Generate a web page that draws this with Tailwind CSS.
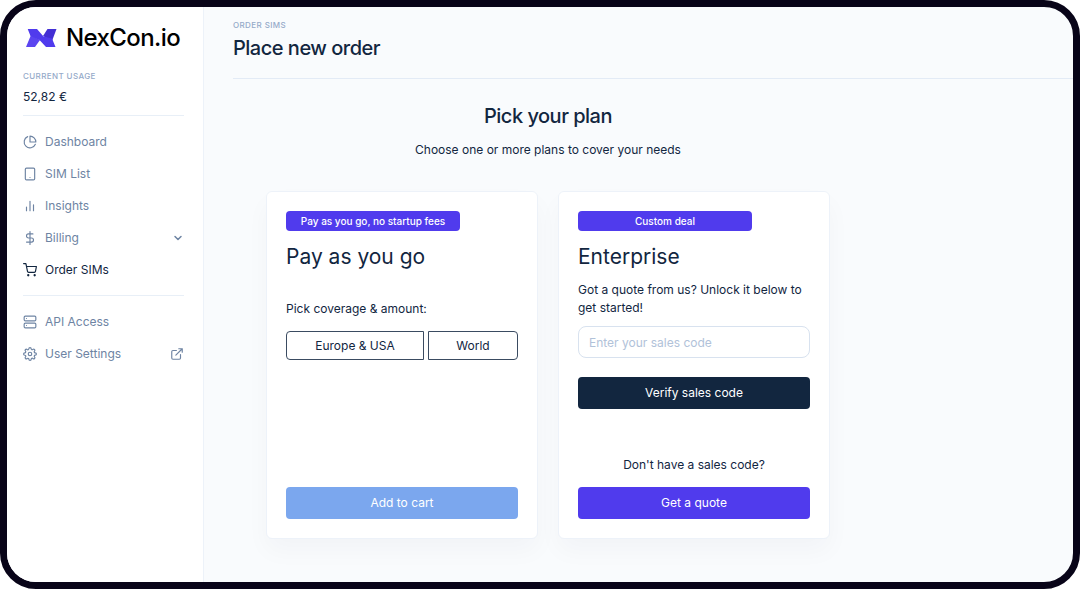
<!DOCTYPE html>
<html lang="en">
<head>
  <meta charset="UTF-8" />
  <meta name="viewport" content="width=device-width, initial-scale=1.0" />
  <title>NexCon.io - Place new order</title>
  <script src="https://cdn.jsdelivr.net/npm/@tailwindcss/browser@4"></script>
</head>
<body class="bg-white font-['Inter',sans-serif] text-[12px] leading-[18px] text-[#12263f]">
  <div class="flex min-h-screen overflow-hidden rounded-[36px] border-[7px] border-[#080418] bg-[#f9fbfd]">

    <!-- Sidebar -->
    <aside class="w-[197px] shrink-0 border-r border-[#edf2f9] bg-white pl-4 pr-[19px] pt-[18px]">
      <a href="#" class="flex items-center gap-[9px] pl-[3px] text-black">
        <svg class="h-[18px] w-[31px]" viewBox="0 0 31 18" aria-hidden="true">
          <path d="M5 6 0 18h9l5-7z" fill="#5b45f0" />
          <path d="M21.500 0h9L26 12l-9-5z" fill="#432fd4" />
          <path d="M1.700 0H11l6.500 7.500L26 9.500l3.500 8.500H20l-6.500-7L4.500 7z" fill="#503bed" />
        </svg>
        <span class="text-[24px] leading-[26px] font-medium tracking-tight">NexCon.io</span>
      </a>

      <div class="mt-5 border-b border-[#e8eff7] pb-[9px]">
        <h6 class="text-[8px] leading-[10px] font-medium uppercase tracking-wider text-[#95aac9]">Current usage</h6>
        <p class="mt-[7px]">52,82 €</p>
      </div>

      <nav>
        <ul class="mt-[10px] border-b border-[#e8eff7] pb-[9px] text-[#6e84a3]">
          <li>
            <a href="#" class="flex h-8 items-center gap-2">
              <svg class="size-[14px]" viewBox="0 0 24 24" fill="none" stroke="currentColor" stroke-width="2" stroke-linecap="round" stroke-linejoin="round"><path d="M21.210 15.890A10 10 0 1 1 8 2.830" /><path d="M22 12A10 10 0 0 0 12 2v10z" /></svg>
              Dashboard
            </a>
          </li>
          <li>
            <a href="#" class="flex h-8 items-center gap-2">
              <svg class="size-[14px]" viewBox="0 0 24 24" fill="none" stroke="currentColor" stroke-width="2" stroke-linecap="round" stroke-linejoin="round"><rect x="4" y="2" width="16" height="20" rx="2" /><path d="M12 18h.01" /></svg>
              SIM List
            </a>
          </li>
          <li>
            <a href="#" class="flex h-8 items-center gap-2">
              <svg class="size-[14px]" viewBox="0 0 24 24" fill="none" stroke="currentColor" stroke-width="2" stroke-linecap="round" stroke-linejoin="round"><path d="M18 20V10M12 20V4M6 20v-6" /></svg>
              Insights
            </a>
          </li>
          <li>
            <a href="#" class="flex h-8 items-center gap-2">
              <svg class="size-[14px]" viewBox="0 0 24 24" fill="none" stroke="currentColor" stroke-width="2" stroke-linecap="round" stroke-linejoin="round"><path d="M12 1v22M17 5H9.500a3.500 3.500 0 0 0 0 7h5a3.500 3.500 0 0 1 0 7H6" /></svg>
              Billing
              <svg class="ml-auto size-3" viewBox="0 0 24 24" fill="none" stroke="currentColor" stroke-width="3" stroke-linecap="round" stroke-linejoin="round"><path d="m6 9 6 6 6-6" /></svg>
            </a>
          </li>
          <li>
            <a href="#" class="flex h-8 items-center gap-2 text-[#12263f]" aria-current="page">
              <svg class="size-[14px]" viewBox="0 0 24 24" fill="none" stroke="currentColor" stroke-width="2" stroke-linecap="round" stroke-linejoin="round"><circle cx="9" cy="21" r="1" /><circle cx="20" cy="21" r="1" /><path d="M1 1h4l2.680 13.390a2 2 0 0 0 2 1.610h9.720a2 2 0 0 0 2-1.610L23 6H6" /></svg>
              Order SIMs
            </a>
          </li>
        </ul>
        <ul class="mt-[10px] text-[#6e84a3]">
          <li>
            <a href="#" class="flex h-8 items-center gap-2">
              <svg class="size-[14px]" viewBox="0 0 24 24" fill="none" stroke="currentColor" stroke-width="2" stroke-linecap="round" stroke-linejoin="round"><rect x="2" y="2" width="20" height="8" rx="2" /><rect x="2" y="14" width="20" height="8" rx="2" /><path d="M6 6h.01M6 18h.01" /></svg>
              API Access
            </a>
          </li>
          <li>
            <a href="#" class="flex h-8 items-center gap-2">
              <svg class="size-[14px]" viewBox="0 0 24 24" fill="none" stroke="currentColor" stroke-width="2" stroke-linecap="round" stroke-linejoin="round"><circle cx="12" cy="12" r="3" /><path d="M19.400 15a1.650 1.650 0 0 0 .33 1.820l.06.06a2 2 0 0 1-2.830 2.830l-.06-.06a1.650 1.650 0 0 0-1.820-.33 1.650 1.650 0 0 0-1 1.510V21a2 2 0 0 1-4 0v-.09A1.650 1.650 0 0 0 9 19.400a1.650 1.650 0 0 0-1.820.33l-.06.06a2 2 0 0 1-2.830-2.830l.06-.06a1.650 1.650 0 0 0 .33-1.820 1.650 1.650 0 0 0-1.510-1H3a2 2 0 0 1 0-4h.09A1.650 1.650 0 0 0 4.600 9a1.650 1.650 0 0 0-.33-1.820l-.06-.06a2 2 0 0 1 2.830-2.830l.06.06a1.650 1.650 0 0 0 1.820.33H9a1.650 1.650 0 0 0 1-1.510V3a2 2 0 0 1 4 0v.09a1.650 1.650 0 0 0 1 1.510 1.650 1.650 0 0 0 1.820-.33l.06-.06a2 2 0 0 1 2.830 2.830l-.06.06a1.650 1.650 0 0 0-.33 1.820V9a1.650 1.650 0 0 0 1.510 1H21a2 2 0 0 1 0 4h-.09a1.650 1.650 0 0 0-1.510 1z" /></svg>
              User Settings
              <svg class="ml-auto size-[14px]" viewBox="0 0 24 24" fill="none" stroke="currentColor" stroke-width="2" stroke-linecap="round" stroke-linejoin="round"><path d="M18 13v6a2 2 0 0 1-2 2H5a2 2 0 0 1-2-2V8a2 2 0 0 1 2-2h6M15 3h6v6M10 14 21 3" /></svg>
            </a>
          </li>
        </ul>
      </nav>
    </aside>

    <!-- Main content -->
    <main class="flex-1 pl-[29px]">
      <header class="border-b border-[#e3ebf6] pb-[17px] pt-[13px]">
        <h6 class="text-[8px] leading-[10px] font-medium uppercase tracking-wider text-[#95aac9]">Order SIMs</h6>
        <h1 class="mt-[5px] text-[20px] leading-[26px] font-medium tracking-tight">Place new order</h1>
      </header>

      <section class="max-w-[630px] px-[33px] pt-6">
        <div class="text-center">
          <h2 class="text-[20px] leading-[26px] font-medium tracking-tight">Pick your plan</h2>
          <p class="mt-3">Choose one or more plans to cover your needs</p>
        </div>

        <div class="mt-8 grid grid-cols-2 gap-5">
          <div class="flex h-[348px] flex-col rounded-md border border-[#edf2f9] bg-white p-[19px] shadow-[0_12px_24px_rgba(18,38,63,0.03)]">
            <span class="w-3/4 rounded-sm bg-[#503bed] text-center text-[10px] leading-5 font-medium text-white">Pay as you go, no startup fees</span>
            <h3 class="mt-[13px] text-[21px] leading-[26px]">Pay as you go</h3>
            <p class="mt-[30px]">Pick coverage &amp; amount:</p>
            <div class="mt-[13px] flex gap-1">
              <button type="button" class="h-[29px] w-[138px] rounded-l-sm border border-[#3a4b61]">Europe &amp; USA</button>
              <button type="button" class="h-[29px] flex-1 rounded-r-sm border border-[#3a4b61]">World</button>
            </div>
            <button type="button" class="mt-auto h-8 rounded-sm bg-[#7ba7ee] text-white">Add to cart</button>
          </div>

          <div class="flex h-[348px] flex-col rounded-md border border-[#edf2f9] bg-white p-[19px] shadow-[0_12px_24px_rgba(18,38,63,0.03)]">
            <span class="w-3/4 rounded-sm bg-[#503bed] text-center text-[10px] leading-5 font-medium text-white">Custom deal</span>
            <h3 class="mt-[13px] text-[21px] leading-[26px]">Enterprise</h3>
            <label for="sales-code" class="mt-[11px]">Got a quote from us? Unlock it below to get started!</label>
            <input type="text" id="sales-code" name="sales-code" placeholder="Enter your sales code"
                   class="mt-[9px] h-8 w-full rounded-lg border border-[#d8e2ef] bg-white px-[10px] placeholder:text-[#b1c2d9]" />
            <button type="button" class="mt-[19px] h-8 rounded-sm bg-[#12263f] text-white">Verify sales code</button>
            <p class="mt-auto text-center">Don't have a sales code?</p>
            <button type="button" class="mt-[13px] h-8 rounded-sm bg-[#503bed] text-white">Get a quote</button>
          </div>
        </div>
      </section>
    </main>
  </div>
</body>
</html>
